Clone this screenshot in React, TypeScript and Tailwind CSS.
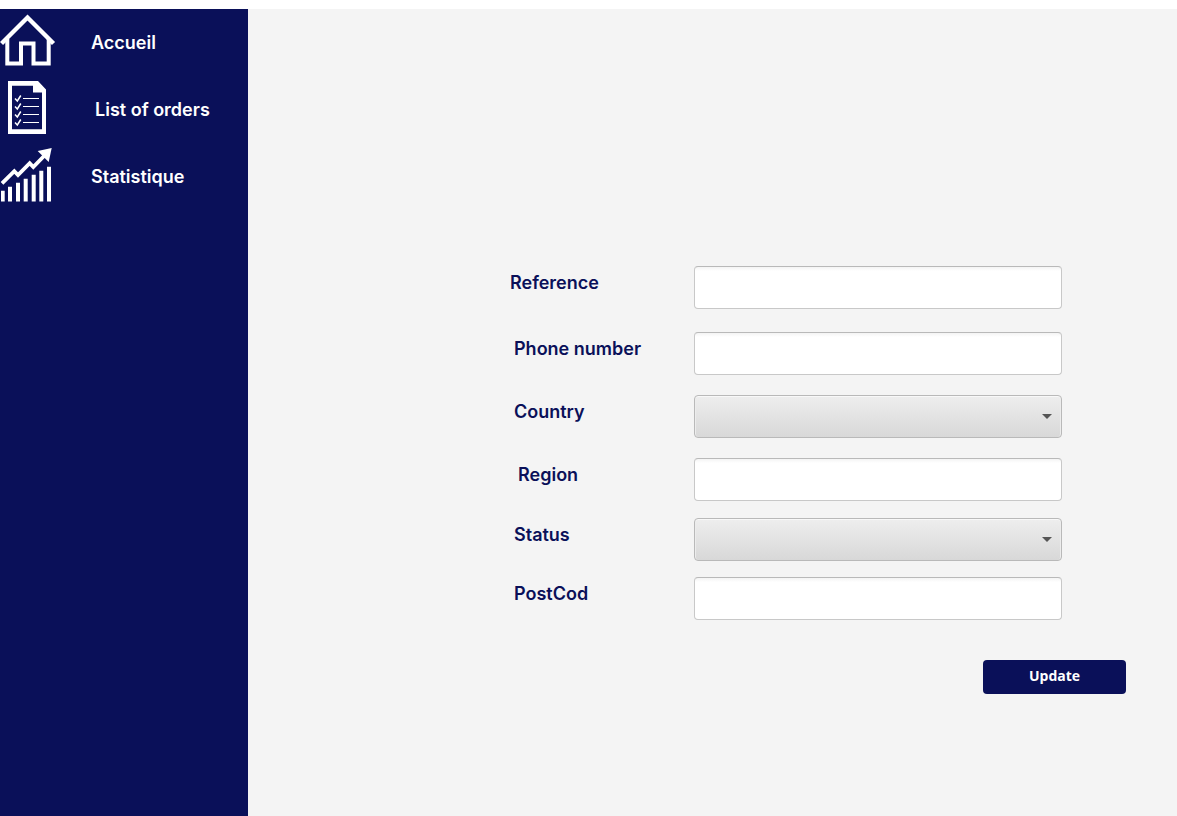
import React from "react";

function HomeIcon() {
  return (
    <svg width="56" height="67" viewBox="0 0 56 67" fill="none" stroke="white" strokeWidth="4" aria-hidden="true">
      <path d="M1.5 34.5 27.5 8.5 53.5 34.5" strokeWidth="4.4" />
      <path d="M7.3 30V54.5H21V34.5H33.5V54.5H48.7V30" />
    </svg>
  );
}

function OrdersIcon() {
  return (
    <svg width="56" height="67" viewBox="0 0 56 67" aria-hidden="true">
      <path
        fill="white"
        fillRule="evenodd"
        d="M8 5H38L46 13.5V58H8ZM12 9.7V53.3H42V16.5H33V9.7Z"
      />
      <g stroke="white" fill="none">
        <path strokeWidth="1.2" d="M23 22.5H39M23 30.5H39M23 38.5H39M23 46.5H39" />
        <path
          strokeWidth="1.5"
          d="M15 22.5 17.3 25 20.8 19.5M15 30.5 17.3 33 20.8 27.5M15 38.5 17.3 41 20.8 35.5M15 46.5 17.3 49 20.8 43.5"
        />
      </g>
    </svg>
  );
}

function StatsIcon() {
  return (
    <svg width="56" height="67" viewBox="0 0 56 67" fill="white" aria-hidden="true">
      <path d="M1 47.7H4.7V58.5H1ZM8 43.7H12V58.5H8ZM16 39.7H20V58.5H16ZM23.7 35.7H27.7V58.5H23.7ZM31.7 31.7H35.7V58.5H31.7ZM39.3 27.7H43.3V58.5H39.3ZM47 23.7H51V58.5H47Z" />
      <path
        fill="none"
        stroke="white"
        strokeWidth="3.8"
        d="M2 40.3 14.3 28.2 18 32 29.7 20.2 33.3 24 46 11"
      />
      <path d="M37.7 8 51.7 5 48.7 19Z" />
    </svg>
  );
}

const links = [
  { label: "Accueil", icon: <HomeIcon />, indent: "pl-[35px]" },
  { label: "List of orders", icon: <OrdersIcon />, indent: "pl-[39px]" },
  { label: "Statistique", icon: <StatsIcon />, indent: "pl-[35px]" },
];

type Field = { id: string; label: string; kind: "text" | "select"; indent: string; space: string };

const fields: Field[] = [
  { id: "reference", label: "Reference", kind: "text", indent: "pl-0", space: "mb-[23px]" },
  { id: "phone", label: "Phone number", kind: "text", indent: "pl-1", space: "mb-5" },
  { id: "country", label: "Country", kind: "select", indent: "pl-1", space: "mb-5" },
  { id: "region", label: "Region", kind: "text", indent: "pl-2", space: "mb-[17px]" },
  { id: "status", label: "Status", kind: "select", indent: "pl-1", space: "mb-4" },
  { id: "postcode", label: "PostCod", kind: "text", indent: "pl-1", space: "mb-10" },
];

function FormRow({ id, label, kind, indent, space }: Field) {
  return (
    <div className={`flex items-start pr-16 ${space}`}>
      <label
        htmlFor={id}
        className={`w-[184px] shrink-0 pt-[5px] text-lg leading-6 font-semibold text-[#0a1059] ${indent}`}
      >
        {label}
      </label>
      {kind === "text" ? (
        <input
          id={id}
          type="text"
          className="h-[43px] min-w-0 flex-1 rounded border border-[#c8c8c8] border-t-[#b9b9b9] bg-linear-to-b from-[#f4f4f4] to-white to-10% px-3 text-base"
        />
      ) : (
        <div className="relative min-w-0 flex-1">
          <select
            id={id}
            className="block h-[43px] w-full appearance-none rounded border border-[#b9b9b9] bg-linear-to-b from-[#eeeeee] to-[#d8d8d8] px-3 text-base shadow-[inset_0_1px_0_#f8f8f8,inset_1px_0_0_#ececec,inset_-1px_0_0_#ececec]"
          />
          <svg
            className="pointer-events-none absolute top-[19px] right-[10px]"
            width="10"
            height="5"
            viewBox="0 0 10 5"
            aria-hidden="true"
          >
            <path d="M0 0H10L5 5Z" fill="#555555" />
          </svg>
        </div>
      )}
    </div>
  );
}

export default function App() {
  return (
    <div className="flex min-h-screen bg-white pt-[9px] font-['Inter',sans-serif]">
      <nav className="w-[248px] shrink-0 bg-[#0a1059]">
        {links.map(({ label, icon, indent }) => (
          <a key={label} href="#" className="flex h-[67px] items-center text-lg leading-6 font-semibold text-white">
            {icon}
            <span className={indent}>{label}</span>
          </a>
        ))}
      </nav>
      <main className="min-w-0 flex-1 bg-[#f4f4f4] pt-[257px] pr-[51px] pl-[262px]">
        <form onSubmit={(e) => e.preventDefault()}>
          {fields.map((field) => (
            <FormRow key={field.id} {...field} />
          ))}
          <div className="flex justify-end">
            <button
              type="submit"
              className="h-[34px] w-[143px] rounded bg-[#0a1059] pb-0.5 font-['Open_Sans',sans-serif] text-sm font-bold text-white"
            >
              Update
            </button>
          </div>
        </form>
      </main>
    </div>
  );
}
